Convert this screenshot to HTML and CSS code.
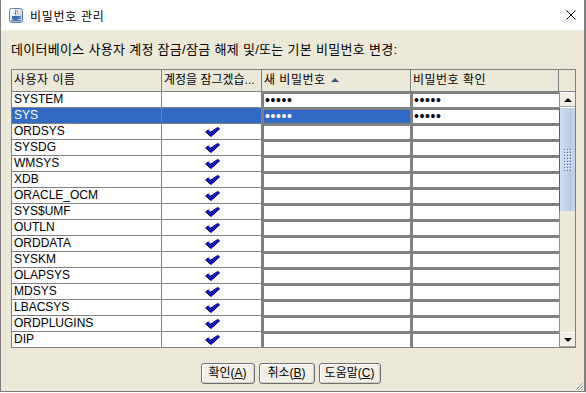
FILE: index.html
```html
<!DOCTYPE html>
<html lang="ko">
<head>
  <meta charset="UTF-8" />
  <title>비밀번호 관리</title>
  <link rel="stylesheet" href="styles.css">
</head>
<body>

  <div class="window">
    <div class="titlebar">
      <svg class="app-icon" width="14" height="15" viewBox="0 0 14 15">
        <defs>
          <linearGradient id="iconbg" x1="0" y1="0" x2="1" y2="1">
            <stop offset="0" stop-color="#ffffff"/>
            <stop offset="1" stop-color="#bccfe6"/>
          </linearGradient>
        </defs>
        <rect x="0.5" y="0.5" width="13" height="14" rx="2" fill="url(#iconbg)" stroke="#5f7ea6"/>
        <path d="M6.5 1.8 C8.5 3.5 4.5 4.5 7 6.8" stroke="#d9452b" fill="none" stroke-width="1.1"/>
        <path d="M8.5 2.8 C9.6 4 7.8 4.8 9 6.2" stroke="#e8803a" fill="none" stroke-width="0.9"/>
        <path d="M3 8 H10 V9.8 A2.2 2.2 0 0 1 7.8 12 H5.2 A2.2 2.2 0 0 1 3 9.8 Z" fill="#3a6cb4"/>
        <path d="M10 8.6 H11.6 V10.4 H9.8" stroke="#3a6cb4" fill="none"/>
        <path d="M2 12.8 H12" stroke="#2b5597" stroke-width="1"/>
      </svg>
      <span class="title-text">비밀번호 관리</span>
      <svg class="close" width="10" height="10" viewBox="0 0 10 10">
        <path d="M0.5 0.5 L9.5 9.5 M9.5 0.5 L0.5 9.5" stroke="#000" stroke-width="1"/>
      </svg>
    </div>

    <div class="content">
      <div class="label">데이터베이스 사용자 계정 잠금/잠금 해제 및/또는 기본 비밀번호 변경:</div>

      <div class="frame">
        <div class="thead">
          <div class="th c1">사용자 이름</div>
          <div class="th c2">계정을 잠그겠습...</div>
          <div class="th c3">새 비밀번호<span class="sort-up"></span></div>
          <div class="th c4">비밀번호 확인</div>
          <div class="th corner"></div>
        </div>

        <div class="view">
          <div class="tbody" id="tbody"></div>

          <div class="vscroll">
            <div class="sb-btn"><span class="arrow-up"></span></div>
            <div class="sb-thumb">
              <svg width="8" height="22" viewBox="0 0 8 22">
                <defs>
                  <pattern id="grip" width="3" height="3" patternUnits="userSpaceOnUse">
                    <rect x="0" y="0" width="1" height="1" fill="#4a6fb5"/>
                    <rect x="1" y="1" width="1" height="1" fill="#ffffff"/>
                  </pattern>
                </defs>
                <rect width="8" height="22" fill="url(#grip)"/>
              </svg>
            </div>
            <div class="sb-track"></div>
            <div class="sb-btn"><span class="arrow-down"></span></div>
          </div>
        </div>
      </div>

      <div class="buttons">
        <button class="btn w54">확인(<u>A</u>)</button>
        <button class="btn w56">취소(<u>B</u>)</button>
        <button class="btn w62">도움말(<u>C</u>)</button>
      </div>
    </div>

    <svg class="grip-corner" width="10" height="10" viewBox="0 0 10 10">
      <path d="M9 2 L2 9 M9 5 L5 9 M9 8 L8 9" stroke="#9a9889" stroke-width="1"/>
      <path d="M10 2 L2 10 M10 5 L5 10" stroke="#ffffff" stroke-width="1"/>
    </svg>
  </div>

  <script>
    const users = [
      { name: 'SYSTEM', lock: false, pw: true },
      { name: 'SYS', lock: false, pw: true, sel: true },
      { name: 'ORDSYS', lock: true },
      { name: 'SYSDG', lock: true },
      { name: 'WMSYS', lock: true },
      { name: 'XDB', lock: true },
      { name: 'ORACLE_OCM', lock: true },
      { name: 'SYS$UMF', lock: true },
      { name: 'OUTLN', lock: true },
      { name: 'ORDDATA', lock: true },
      { name: 'SYSKM', lock: true },
      { name: 'OLAPSYS', lock: true },
      { name: 'MDSYS', lock: true },
      { name: 'LBACSYS', lock: true },
      { name: 'ORDPLUGINS', lock: true },
      { name: 'DIP', lock: true }
    ];

    const check = `
      <svg width="15" height="10" viewBox="0 0 15 10">
        <path d="M0.6 5 L3.3 2.9 L5.6 5.2 L12.7 0.4 L14.6 1.9 L5.8 9.6 Z" fill="#1212d6" stroke="#00005e" stroke-width="1" stroke-linejoin="round"/>
      </svg>`;

    const tbody = document.getElementById('tbody');

    users.forEach(u => {
      const row = document.createElement('div');
      row.classList.add('tr');
      if (u.sel) row.classList.add('sel');

      const dots = u.pw ? '•••••' : '';

      row.innerHTML = `
        <div class="td c1">${u.name}</div>
        <div class="td c2">${u.lock ? check : ''}</div>
        <div class="td c3 pw">${dots}</div>
        <div class="td c4 pw">${dots}</div>
      `;

      tbody.appendChild(row);
    });
  </script>
</body>
</html>
```

FILE: styles.css
```css
body {
  margin: 0;
  background: #ffffff;
  font-family: 'Liberation Sans', 'Noto Sans CJK KR', sans-serif;
  font-size: 12px;
  color: #000;
}

.window {
  position: relative;
  width: 586px;
  height: 392px;
  box-sizing: border-box;
  border: 1px solid #7f7f7f;
  border-top: 0;
  border-right-width: 2px;
  background: #ece9d8;
  display: flex;
  flex-direction: column;
}

.titlebar {
  height: 30px;
  background: #fff;
  display: flex;
  align-items: center;
  gap: 7px;
  padding: 0 8px;
}

.title-text {
  flex: 1;
  font-family: 'Noto Sans CJK KR', sans-serif;
  font-size: 12px;
  letter-spacing: 0.7px;
  color: #000;
}

.content {
  padding: 12px 8px 0 10px;
}

.label {
  height: 16px;
  line-height: 16px;
  font-size: 13px;
  letter-spacing: 0.3px;
  margin-bottom: 11px;
  white-space: nowrap;
}

.frame {
  width: 565px;
  box-sizing: border-box;
  border: 1px solid #808080;
  background: #fff;
}

/* header */

.thead {
  display: flex;
  height: 22px;
  background: #ece9d8;
}

.th {
  box-sizing: border-box;
  height: 22px;
  line-height: 21px;
  padding-left: 2px;
  border-right: 1px solid #808080;
  border-bottom: 1px solid #808080;
  letter-spacing: 0.5px;
  white-space: nowrap;
  overflow: hidden;
}

.th.c2 {
  letter-spacing: 0;
}

.th.corner {
  width: 16px;
  border-right: 0;
}

.sort-up {
  display: inline-block;
  margin-left: 5px;
  vertical-align: 2px;
  border-left: 4px solid transparent;
  border-right: 4px solid transparent;
  border-bottom: 4px solid #37527a;
}

.c1 { width: 150px; }
.c2 { width: 100px; }
.c3 { width: 149px; }
.c4 { width: 148px; }

/* rows */

.view {
  display: flex;
  height: 255px;
  overflow: hidden;
}

.tbody {
  width: 547px;
}

.tr {
  display: flex;
  height: 16px;
}

.td {
  box-sizing: border-box;
  height: 16px;
  line-height: 15px;
  padding-left: 2px;
  border-right: 1px solid #808080;
  border-bottom: 1px solid #808080;
  white-space: nowrap;
  overflow: hidden;
}

.td.c2 {
  display: flex;
  align-items: center;
  justify-content: center;
  padding: 0 0 0 2px;
}

.td.pw {
  border-left: 2px solid #808080;
  border-top: 2px solid #808080;
  padding-left: 1px;
  font-size: 14px;
  line-height: 13px;
  letter-spacing: 0.6px;
}

.td.c4 {
  border-right: 0;
}

.tr.sel .c1,
.tr.sel .c2,
.tr.sel .c3 {
  background: #316ac5;
  color: #fff;
}

/* scrollbar */

.vscroll {
  width: 16px;
  display: flex;
  flex-direction: column;
}

.sb-btn {
  box-sizing: border-box;
  height: 15px;
  background: #f1efe6;
  border-left: 1px solid #8c8c8c;
  border-top: 1px solid #fff;
  border-bottom: 1px solid #a9a797;
  display: flex;
  align-items: center;
  justify-content: center;
}

.arrow-up {
  border-left: 4px solid transparent;
  border-right: 4px solid transparent;
  border-bottom: 4px solid #000;
}

.arrow-down {
  border-left: 4px solid transparent;
  border-right: 4px solid transparent;
  border-top: 4px solid #000;
}

.sb-thumb {
  box-sizing: border-box;
  height: 104px;
  border-left: 1px solid #3a68c0;
  border-top: 1px solid #fff;
  background: linear-gradient(to right, #d3dff2, #b7cae7 70%, #c9d6ea);
  display: flex;
  align-items: center;
  justify-content: center;
}

.sb-track {
  flex: 1;
  background: #ece9d8;
  border-left: 1px solid #8c8c8c;
}

/* buttons */

.buttons {
  display: flex;
  justify-content: center;
  gap: 4px;
  margin-top: 15px;
  padding-right: 6px;
}

.btn {
  box-sizing: border-box;
  height: 21px;
  padding: 0;
  border: 1px solid #6f6f6f;
  border-radius: 3px;
  background: #f2f0e6;
  box-shadow: inset 1px 1px #fff, inset -1px -1px #d4d1c2;
  font-family: 'Liberation Sans', 'Noto Sans CJK KR', sans-serif;
  font-size: 12px;
  line-height: 19px;
  color: #000;
}

.w54 { width: 54px; }
.w56 { width: 56px; }
.w62 { width: 62px; }

.grip-corner {
  position: absolute;
  right: 0;
  bottom: 0;
}
```
